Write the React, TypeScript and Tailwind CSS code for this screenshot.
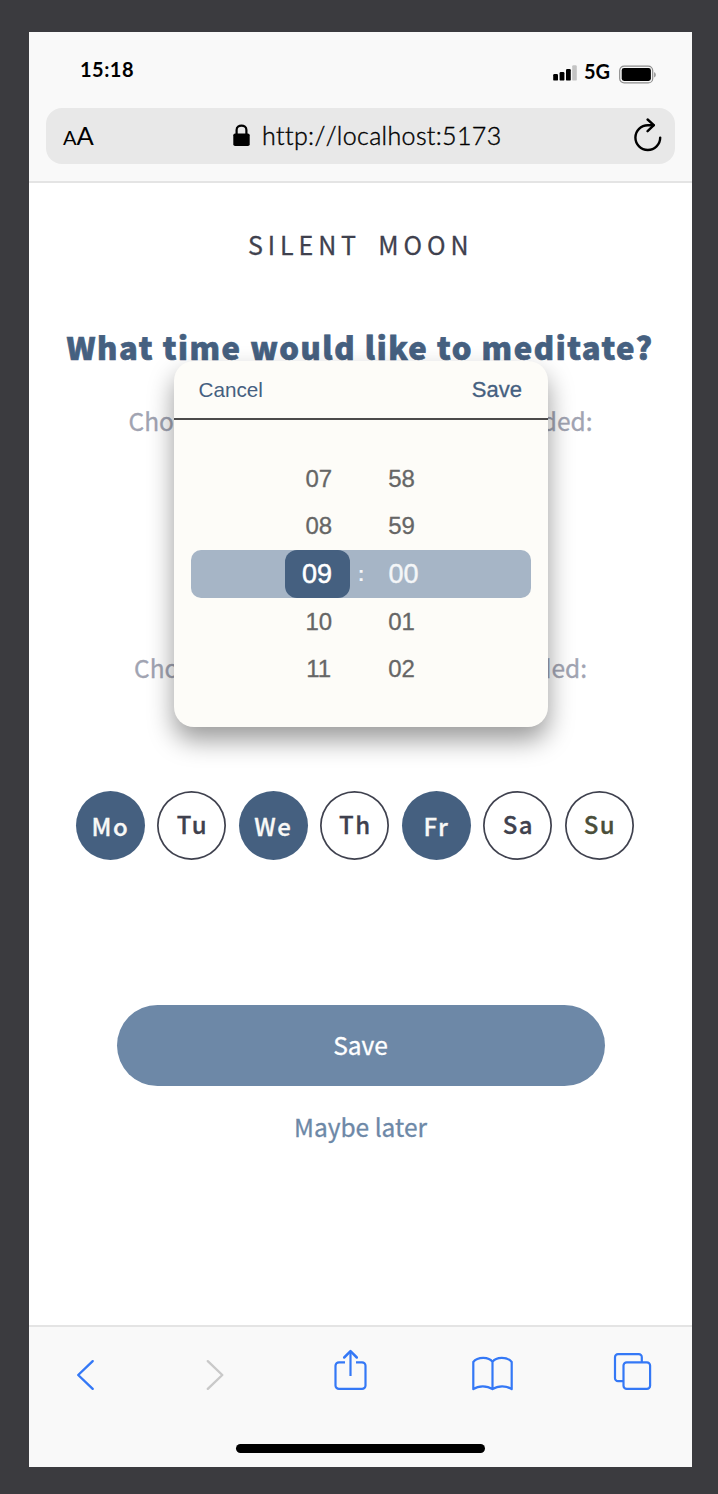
import React from "react";

type Day = { label: string; selected: boolean; tint?: string };

const days: Day[] = [
  { label: "Mo", selected: true },
  { label: "Tu", selected: false },
  { label: "We", selected: true },
  { label: "Th", selected: false },
  { label: "Fr", selected: true },
  { label: "Sa", selected: false },
  { label: "Su", selected: false, tint: "text-[#4a4e3a]" },
];

function StatusBar() {
  return (
    <div className="flex h-[76px] items-start justify-between pt-[25px] pr-[35px] pl-[51px] font-['Lato',sans-serif] text-[20px] leading-[24px] font-bold text-black">
      <span className="tracking-[0.5px]">15:18</span>
      <div className="flex pt-[2px]">
        <svg className="mt-[6px]" width="24" height="17" viewBox="0 0 24 17">
          <rect x="0.2" y="9" width="4.8" height="6.6" rx="1.2" />
          <rect x="6.6" y="7" width="4.8" height="8.6" rx="1.2" />
          <rect x="13" y="4" width="4.8" height="11.6" rx="1.2" />
          <rect x="19.2" y="0.2" width="4.6" height="15.4" rx="1.2" fill="#c4c4c4" />
        </svg>
        <span className="ml-[7px] w-[28px]">5G</span>
        <svg className="mt-[6px] ml-[7px]" width="38" height="19" viewBox="0 0 38 19">
          <rect x="0.7" y="1.1" width="33" height="16.8" rx="4.5" fill="none" stroke="#8c8c8c" strokeWidth="1.2" />
          <rect x="2.7" y="3" width="29.2" height="12.9" rx="2.4" />
          <path d="M35.2 7.2c2 .6 2 4.6 0 5.2z" fill="#8c8c8c" />
        </svg>
      </div>
    </div>
  );
}

function AddressBar() {
  return (
    <div className="mx-[17px] flex h-[56px] items-center rounded-[16px] bg-[#e8e8e8] font-['Lato',sans-serif] text-black">
      <span className="ml-[17px] flex w-[34px] items-baseline leading-[30px]">
        <span className="text-[20px]">A</span>
        <span className="text-[25.5px]">A</span>
      </span>
      <svg className="ml-[136px]" width="18" height="24" viewBox="0 0 18 24">
        <rect x="0.3" y="9.5" width="16.4" height="12.6" rx="1.8" />
        <path d="M3.6 10.5V5.9C3.6 0.1 13.4 0.1 13.4 5.9V10.5" fill="none" stroke="#000" strokeWidth="2.2" />
      </svg>
      <span className="ml-[11px] pb-[2px] text-[25px] leading-[30px] font-light tracking-[0.35px] whitespace-nowrap [-webkit-text-stroke:0.4px_#000] [font-kerning:none] [font-variant-ligatures:none]">
        http://localhost:5173
      </span>
      <svg className="mr-[12px] ml-auto" width="30" height="36" viewBox="0 0 30 36" fill="none" stroke="#000" strokeWidth="2.4" strokeLinecap="round" strokeLinejoin="round">
        <path d="M27.2 19.6A12.4 12.4 0 1 1 14.8 7.2H20.6" />
        <path d="M14.6 1.5L20.8 7.2L14.6 13.2" />
      </svg>
    </div>
  );
}

function TimePicker() {
  const before = [["07", "58"], ["08", "59"]];
  const after = [["10", "01"], ["11", "02"]];
  const row = ([h, m]: string[]) => (
    <div key={h} className="flex h-[47.5px] items-center justify-center text-[24px] text-[#666] [-webkit-text-stroke:0.3px_#666]">
      <span className="w-[28px] text-center">{h}</span>
      <span className="ml-[55.5px] w-[28px]">{m}</span>
    </div>
  );
  return (
    <div className="absolute top-[329px] left-[144.5px] h-[365.5px] w-[374px] rounded-[20px] bg-[#fdfcf8] font-['Liberation_Sans',sans-serif] shadow-[0_13px_26px_rgba(0,0,0,0.4)]">
      <div className="flex h-[59px] items-center justify-between border-b-2 border-[#4c4b4b] pr-[25.5px] pl-[25px] text-[#456080]">
        <span className="text-[20.7px]">Cancel</span>
        <span className="text-[22px] [-webkit-text-stroke:0.3px_#456080]">Save</span>
      </div>
      <div className="pt-[35px]">
        {before.map(row)}
        <div className="mx-[17px] flex h-[48px] rounded-[10px] bg-[#a6b5c6] pl-[94px] text-[27px] text-[#f4f6f8]">
          <span className="flex w-[65px] items-center justify-center rounded-[12px] bg-[#456080] text-white [-webkit-text-stroke:0.5px_white]">09</span>
          <span className="flex w-[23px] items-center justify-center text-[20px] font-bold">:</span>
          <span className="ml-[16px] flex items-center [-webkit-text-stroke:0.4px_#f4f6f8]">00</span>
        </div>
        {after.map(row)}
      </div>
    </div>
  );
}

function Hint({ words, width }: { words: string[]; width: string }) {
  return (
    <p className={`mx-auto flex justify-between text-[24.5px] leading-[36px] text-[#a1a4b2] [-webkit-text-stroke:0.3px_#a1a4b2] ${width}`}>
      {words.map((w) => (
        <span key={w}>{w}</span>
      ))}
    </p>
  );
}

function Toolbar() {
  return (
    <footer className="mt-auto flex h-[142px] flex-col items-center border-t-2 border-[#e4e4e4] bg-[#f9f9f9]">
      <div className="flex w-full pt-[21px] pl-[46px] text-[#3478f6]">
        <svg width="20" height="44" viewBox="0 0 20 44" fill="none" stroke="currentColor" strokeWidth="2.4" strokeLinecap="round" strokeLinejoin="round">
          <path d="M17.7 13.2L3.2 27L17.7 40.8" />
        </svg>
        <svg className="ml-[110px]" width="20" height="44" viewBox="0 0 20 44" fill="none" stroke="#c9c9c9" strokeWidth="2.4" strokeLinecap="round" strokeLinejoin="round">
          <path d="M2.8 13.2L17.3 27L2.8 40.8" />
        </svg>
        <svg className="ml-[108px]" width="35" height="44" viewBox="0 0 35 44" fill="none" stroke="currentColor" strokeWidth="2.2" strokeLinejoin="round">
          <path d="M12 14.3H6a3.5 3.5 0 0 0-3.5 3.5V37.4A3.5 3.5 0 0 0 6 40.9H29a3.5 3.5 0 0 0 3.5-3.5V17.8A3.5 3.5 0 0 0 29 14.3H23M17.5 28V3.5" />
          <path d="M11.2 9.5L17.5 3.2L23.8 9.5" strokeLinecap="round" strokeWidth="2.5" />
        </svg>
        <svg className="ml-[103px]" width="43" height="44" viewBox="0 0 43 44" fill="none" stroke="currentColor" strokeWidth="2.2" strokeLinejoin="round">
          <path d="M21.5 14C18 8.5 6.5 8.5 2.3 14V41.2C7.5 37.3 16 37.3 21.5 41.2C27 37.3 35.5 37.3 40.7 41.2V14C36.5 8.5 25 8.5 21.5 14V41" />
        </svg>
        <svg className="ml-[99px]" width="40" height="44" viewBox="0 0 40 44" fill="none" stroke="currentColor" strokeWidth="2.2">
          <path d="M10.5 33.2H5a3 3 0 0 1-3-3V9.2a3 3 0 0 1 3-3H25.8a3 3 0 0 1 3 3V14" />
          <rect x="10.5" y="14.3" width="26.6" height="26.6" rx="3.2" />
        </svg>
      </div>
      <div className="mt-[52px] h-[9px] w-[248.5px] rounded-full bg-black" />
    </footer>
  );
}

export default function App() {
  return (
    <div className="h-[1494px] w-[718px] bg-[#3b3b3f] pt-[32px] pl-[29px] font-['Noto_Sans_CJK_SC',sans-serif]">
      <div className="relative flex h-[1435px] w-[663px] flex-col overflow-hidden bg-white">
        <header className="h-[151px] shrink-0 border-b-2 border-[#e4e4e4] bg-[#f9f9f9]">
          <StatusBar />
          <AddressBar />
        </header>

        <main className="flex flex-col">
          <h2 className="mt-[43px] pl-[219px] text-[25px] leading-[36px] tracking-[4.9px] [word-spacing:6.8px] whitespace-nowrap text-[#3f414e] [-webkit-text-stroke:0.3px_#3f414e]">
            SILENT MOON
          </h2>
          <h1 className="mt-[62px] pl-[37.5px] text-[31px] leading-[46px] font-black tracking-[1.55px] whitespace-nowrap text-[#456080] [-webkit-text-stroke:0.7px_#456080]">
            What time would like to meditate?
          </h1>
          <div className="mt-[33px]">
            <Hint words={["Choose", "time,", "morning", "is", "recommended:"]} width="w-[464px]" />
          </div>
          <div className="mt-[211px]">
            <Hint words={["Choose", "days,", "recommended:"]} width="w-[453px]" />
          </div>
          <div className="mt-[105px] flex gap-[12.5px] pl-[46.9px]">
            {days.map(({ label, selected, tint }) => (
              <button
                key={label}
                className={`flex size-[69px] items-center justify-center rounded-full text-[24px] leading-none font-medium tracking-[1.5px] [-webkit-text-stroke:0.3px_currentColor] ${
                  selected
                    ? "bg-[#456080] text-[#f8f8f6]"
                    : `pb-[3px] pl-[1px] shadow-[inset_0_0_0_1.7px_#3f414e] ${tint ?? "text-[#3f414e]"}`
                }`}
              >
                {label}
              </button>
            ))}
          </div>
          <button className="mx-auto mt-[144.5px] h-[81.5px] w-[488px] rounded-[41px] bg-[#6d88a7] text-[24.5px] text-white [-webkit-text-stroke:0.3px_white]">
            Save
          </button>
          <button className="mx-auto mt-[23px] text-[24.5px] leading-[36px] text-[#6d88a7] [-webkit-text-stroke:0.3px_#6d88a7]">
            Maybe later
          </button>
        </main>

        <TimePicker />
        <Toolbar />
      </div>
    </div>
  );
}
